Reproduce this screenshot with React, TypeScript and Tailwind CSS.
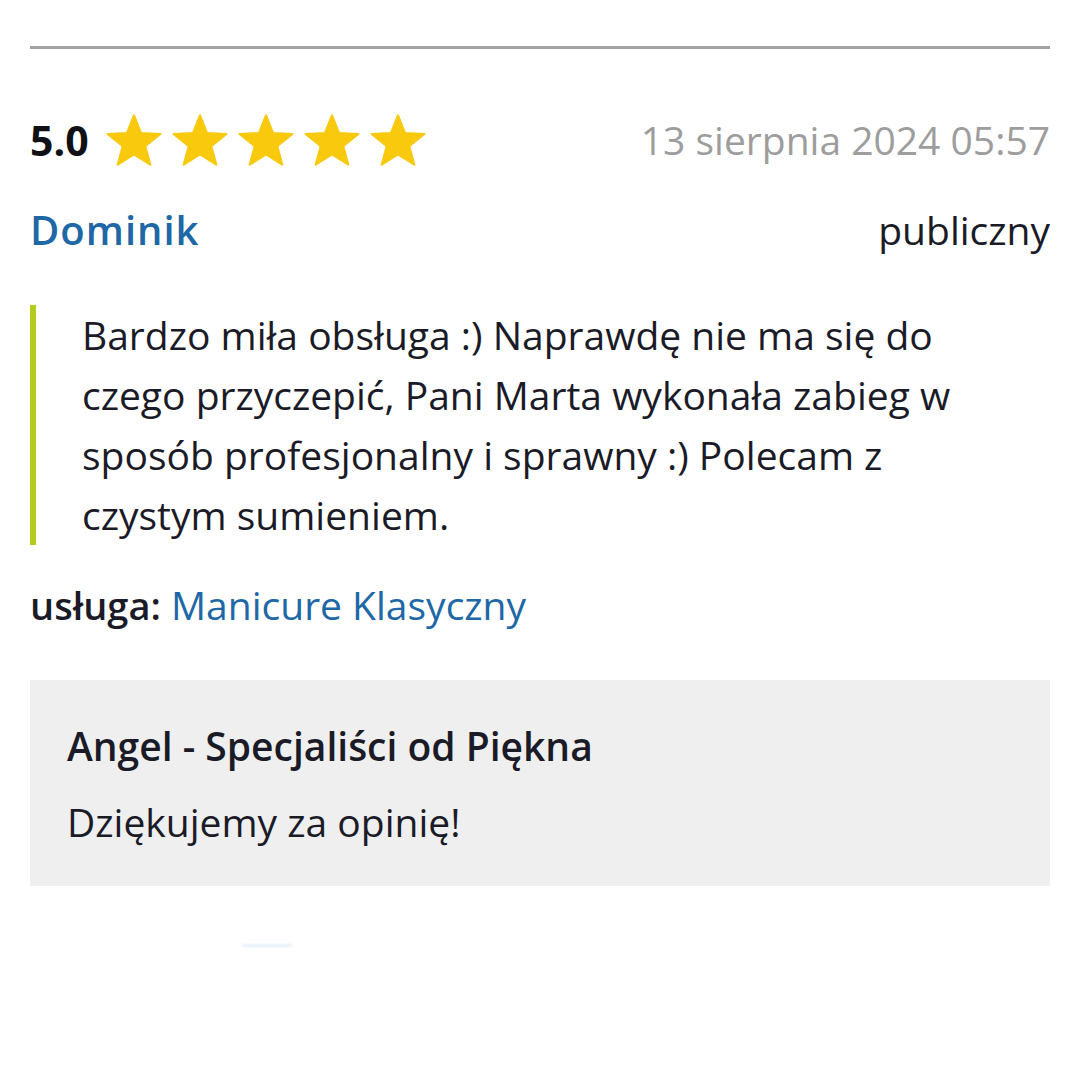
const Star = () => (
  <svg viewBox="0 0 24 23" className="w-[56px] h-[54px]">
    <path
      d="M12 0.9L14.99 8.48L23.3 8.9L16.83 14.16L19 22.1L12 17.67L5 22.1L7.17 14.16L0.7 8.9L9.01 8.48Z"
      fill="#f8c90c"
      stroke="#f8c90c"
      strokeWidth="0.9"
      strokeLinejoin="round"
    />
  </svg>
);

export default function App() {
  return (
    <div className="min-h-[1079px] bg-white px-[30px] pt-[46px] font-['Open_Sans',sans-serif] text-[39px] leading-[60px] text-[#1b1b28]">
      <div className="h-[3px] bg-[#a3a3a3]" />

      {/* Rating + date */}
      <div className="mt-[61px] flex items-center justify-between">
        <div className="flex items-center gap-[17px]">
          <span className="font-bold text-[41px] text-[#0f1117]">5.0</span>
          <div className="flex items-center gap-[10px]">
            {[0, 1, 2, 3, 4].map((i) => (
              <Star key={i} />
            ))}
          </div>
        </div>
        <span className="text-[#9d9d9d]">13 sierpnia 2024 05:57</span>
      </div>

      {/* Author */}
      <div className="mt-[30px] flex items-center justify-between">
        <span className="font-semibold text-[40px] tracking-[1px] text-[#2067a6]">Dominik</span>
        <span>publiczny</span>
      </div>

      {/* Review body */}
      <div className="mt-[45px] border-l-[6px] border-[#b4cb1b] pl-[46px] pr-[60px]">
        Bardzo miła obsługa :) Naprawdę nie ma się do czego przyczepić, Pani
        Marta wykonała zabieg w sposób profesjonalny i sprawny :) Polecam z
        czystym sumieniem.
      </div>

      <div className="mt-[30px]">
        <span className="font-semibold text-[38px]">usługa:</span>{" "}
        <span className="text-[#2067a6]">Manicure Klasyczny</span>
      </div>

      {/* Reply */}
      <div className="mt-[45px] bg-[#efefef] px-[37px] pt-[36px] pb-[34px]">
        <div className="font-semibold">Angel - Specjaliści od Piękna</div>
        <div className="mt-[16px]">Dziękujemy za opinię!</div>
      </div>

      <div className="mt-[58px] ml-[212px] h-[3px] w-[50px] rounded-full bg-[#e6f0fb] blur-[1px]" />
    </div>
  );
}
